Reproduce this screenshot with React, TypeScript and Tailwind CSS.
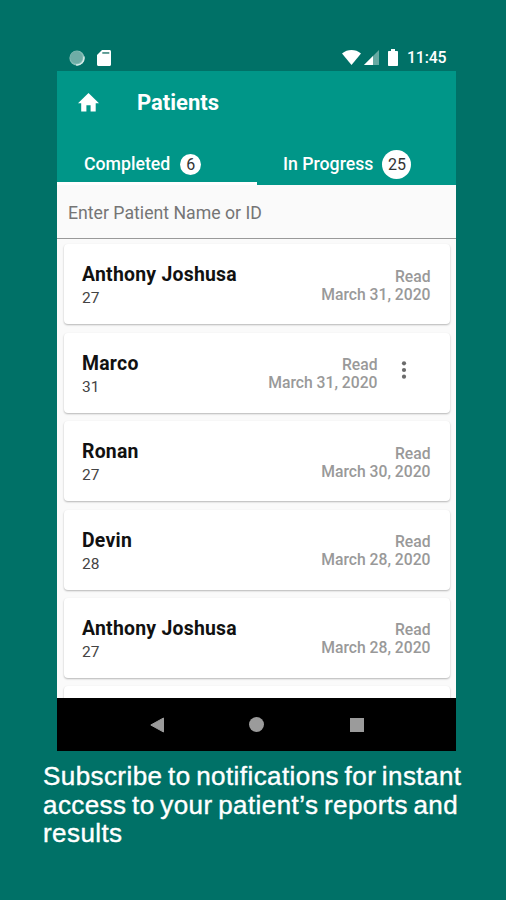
import clsx from "clsx";

const patients = [
  { name: "Anthony Joshusa", age: 27, date: "March 31, 2020", menu: false },
  { name: "Marco", age: 31, date: "March 31, 2020", menu: true },
  { name: "Ronan", age: 27, date: "March 30, 2020", menu: false },
  { name: "Devin", age: 28, date: "March 28, 2020", menu: false },
  { name: "Anthony Joshusa", age: 27, date: "March 28, 2020", menu: false },
];

const StatusBar = () => (
  <div className="flex h-[27px] items-center justify-between pr-[9px] pl-3 text-white">
    <div className="flex items-center gap-3">
      <svg width="16" height="16" viewBox="0 0 16 16">
        <circle cx="8" cy="8" r="7.6" fill="#85bdb6" />
        <circle cx="7.3" cy="7.3" r="6.2" fill="#6fada6" />
        <path d="M14.8 6.5A7 7 0 0 1 7 14.9" fill="none" stroke="#d5ece9" strokeWidth="1.4" />
      </svg>
      <svg width="14" height="16" viewBox="0 0 14 16">
        <path d="M5 0h7.5C13.4 0 14 .6 14 1.5v13c0 .9-.6 1.5-1.5 1.5h-11C.6 16 0 15.4 0 14.5V5z" fill="currentColor" />
        <path d="M5.3 2.1h7v1.7h-7z" fill="#4a8e86" />
      </svg>
    </div>
    <div className="flex items-center">
      <svg width="19" height="15" viewBox="0 0 19 15" className="mr-[3px]">
        <path d="M0 3.4C5.6-1.1 13.4-1.1 19 3.4L9.5 15z" fill="currentColor" />
      </svg>
      <svg width="15" height="15" viewBox="0 0 15 15" className="mr-[9px]">
        <path d="M15 0v15H0z" fill="#65a9a2" />
        <path d="M9 6v9H0z" fill="currentColor" />
      </svg>
      <svg width="10" height="17" viewBox="0 0 10 17" className="mr-[9px]">
        <path d="M3 0h4v2h2c.6 0 1 .4 1 1v13c0 .6-.4 1-1 1H1c-.6 0-1-.4-1-1V3c0-.6.4-1 1-1h2z" fill="currentColor" />
      </svg>
      <span className="text-[15.8px] leading-4 font-medium tracking-[-0.1px]">11:45</span>
    </div>
  </div>
);

const Header = () => (
  <header className="h-[114px] bg-[#009688] text-white">
    <div className="flex h-[62px] items-center pl-[21px]">
      <svg width="21" height="19" viewBox="0 0 21 19" className="mr-[38px]">
        <path d="M8.4 18.5v-6.3h4.2v6.3h5.1v-8.3H21L10.5 0 0 10.2h3.2v8.3z" fill="currentColor" />
      </svg>
      <h1 className="pt-[2px] text-[22px] leading-6 font-bold">Patients</h1>
    </div>
    <div className="flex h-[52px]">
      <button className="flex w-[200px] items-center border-b-[3px] border-white pt-[14px] pl-[27px]">
        <span className="text-[17.7px] font-medium">Completed</span>
        <span className="ml-[10px] flex size-[21px] items-center justify-center rounded-full bg-white text-[16px] text-[#333]">
          6
        </span>
      </button>
      <button className="flex flex-1 items-center pt-[14px] pb-[3px] pl-[26px]">
        <span className="text-[17.7px] font-medium">In Progress</span>
        <span className="ml-[9px] flex size-[29px] items-center justify-center rounded-full bg-white text-[16px] text-[#333]">
          25
        </span>
      </button>
    </div>
  </header>
);

const PatientCard = ({ name, age, date, menu }: (typeof patients)[number]) => (
  <li className="flex h-20 shrink-0 items-center rounded-[4px] bg-white pt-[2px] pl-[18px] shadow-[0_1px_2px_rgba(0,0,0,0.28)]">
    <div className="flex-1">
      <p className="text-[19.4px] leading-[26px] font-bold tracking-[0.25px] text-[#111]">{name}</p>
      <p className="text-[15.5px] leading-[20px] text-[#444]">{age}</p>
    </div>
    <div className={clsx("pt-px text-right text-[15.7px] leading-[18px] font-medium text-[#999]", !menu && "pr-[19px]")}>
      <p>Read</p>
      <p>{date}</p>
    </div>
    {menu && (
      <svg width="6" height="18" viewBox="0 0 6 18" fill="#6b6b6b" className="mr-[43px] mb-[8px] ml-[23px]">
        <circle cx="3" cy="2.3" r="2.1" />
        <circle cx="3" cy="9" r="2.1" />
        <circle cx="3" cy="15.7" r="2.1" />
      </svg>
    )}
  </li>
);

const NavBar = () => (
  <nav className="flex h-[53px] items-center justify-between bg-black pr-[92px] pl-[93px]">
    <svg width="14" height="16" viewBox="0 0 14 16">
      <path d="M13.5 1v14L.8 8z" fill="#9b9b9b" stroke="#9b9b9b" strokeLinejoin="round" />
    </svg>
    <span className="size-[15px] rounded-full bg-[#9b9b9b]" />
    <span className="size-[14px] bg-[#9b9b9b]" />
  </nav>
);

const App = () => {
  return (
    <main className="h-[900px] w-[506px] overflow-hidden bg-[#007167] pt-[44px] font-['Roboto',sans-serif]">
      <div className="ml-[57px] w-[398.5px]">
        <StatusBar />
        <Header />
        <div className="flex h-[54px] items-center border-b border-[#999] bg-[#fafafa] pt-[3px] pl-[11px]">
          <input
            className="w-full bg-transparent text-[17.7px] outline-none placeholder:text-[#757575]"
            placeholder="Enter Patient Name or ID"
          />
        </div>
        <ul className="flex h-[459px] flex-col gap-[8.4px] overflow-hidden bg-[#fafafa] pt-[5.4px] pr-[6px] pl-[7px]">
          {patients.map((patient, index) => (
            <PatientCard key={index} {...patient} />
          ))}
          <li className="h-20 shrink-0 rounded-[4px] bg-white shadow-[0_1px_2px_rgba(0,0,0,0.28)]" />
        </ul>
        <NavBar />
      </div>
      <p className="mt-[11px] ml-[43px] font-['Liberation_Sans',sans-serif] text-[26px] leading-[28.5px] tracking-[0.42px] text-white [word-spacing:-2px] [-webkit-text-stroke:0.4px_white]">
        Subscribe to notifications for instant
        <br />
        access to your patient’s reports and
        <br />
        results
      </p>
    </main>
  );
};

export default App;
